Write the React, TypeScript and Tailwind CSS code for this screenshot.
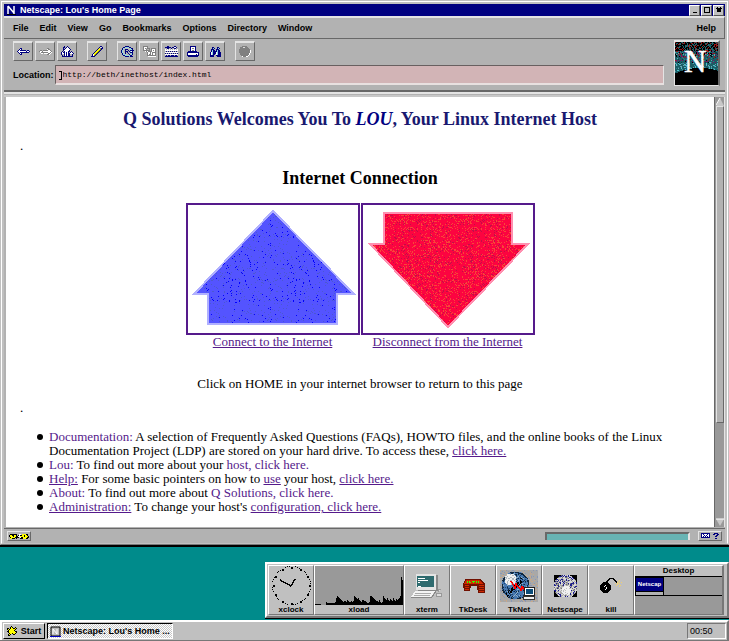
import type { ReactNode } from 'react';

const palette: Record<string, string> = {
  b: '#000080',
  w: '#ffffff',
  k: '#000000',
  g: '#808080',
  l: '#dcdcdc',
  y: '#ffff00',
  o: '#808000',
  s: '#f0d070',
  c: '#c0c0c0',
  r: '#d02800',
  m: '#701000',
  n: '#30ff00',
  a: '#8fd8e0',
};

function Pixels({ rows }: { rows: string[] }) {
  const width = Math.max(...rows.map((r) => r.length));
  return (
    <svg width={width} height={rows.length} shapeRendering="crispEdges" aria-hidden="true">
      {rows.flatMap((row, y) =>
        row.split('').map((ch, x) =>
          palette[ch] ? <rect key={`${x}-${y}`} x={x} y={y} width="1" height="1" fill={palette[ch]} /> : null,
        ),
      )}
    </svg>
  );
}

function makeRandom(seed: number) {
  let s = seed;
  return () => {
    s = (s * 16807) % 2147483647;
    return s / 2147483647;
  };
}

const backIcon = [
  '...bb........',
  '..bwb........',
  '.bwbbbbbb.bb.',
  'bwwwwwwwwbwwb',
  '.bwbbbbbbbbb.',
  '..bwb........',
  '...bb........',
];
const forwardIcon = [
  '........gg...',
  '........wgg..',
  '.gg.gggggwwg.',
  'gwwgwwwwwwwwg',
  '.wgggggggwwgw',
  '..ww.wwwwggw.',
  '........ggw..',
];
const homeIcon = [
  '...b..b......',
  '..bb.bwb.....',
  '..b.bwwwb....',
  '..bbwwwwwb...',
  '..bwwwwwb....',
  '.b.bwwwbb.b..',
  'bwbbwbwb.bwb.',
  'bwwbwbwbbwwwb',
  'b..bwbwbb..b.',
  '.b.bwbwbb..b.',
  '.bbbbbbbbbbb.',
];
const editIcon = [
  '.........bb.',
  '........bllb',
  '.......bygbb',
  '......byyob.',
  '.....byyob..',
  '....byyob...',
  '...byyob....',
  '..byyob.....',
  '.bwyob......',
  '.bwob.......',
  'bbbb........',
];
const reloadIcon = [
  '....bbbb.....',
  '..bbaaaabb...',
  '.baccccccabb.',
  '.ba.bbb.caab.',
  'bac.b..b.bbbb',
  'bac.bbb.bawb.',
  'bac.b.b..bbb.',
  '.bacb..b..ab.',
  '.baacc..bcab.',
  '..bbaaaaabb..',
  '....bbbb.bbb.',
];
const imagesIcon = [
  'ggggg........',
  'gwwwg........',
  'gwg.ggg.ggggg',
  'gwwg..g.gwwwg',
  'ggggggg.gwgwg',
  '..wgwggggwwwg',
  '....gwwgwgggg',
  '....gwwgwgwwg',
  '....gwggwgwwg',
  '....ggggggggg',
  '.....wwwwwwww',
];
const openIcon = [
  '..bb.....bb..',
  'bbbbbb.bbwwb.',
  '..bb..b..bb..',
  'w.w.w.w.w.w.w',
  'wwwwwwwwwwwww',
  '.b.b.b.b.b.b.',
  'wwwwwwwwwwwww',
  'b.b.b.b.b.b.b',
  'wwwwwwwwwwwww',
  '.b.bb.bbb.bb.',
  'bbbbbbbbbbbbb',
];
const printIcon = [
  '...bbbbbb....',
  '...bwwwwb....',
  '...bwggwb....',
  '...bwwwwb....',
  '...bwggwb....',
  '.bbbbbbbbb...',
  'bbbbbbbbbbbb.',
  'bwwwwwwwwwwb.',
  'bwwwwwwwwbwb.',
  'bbbbbbbbbbbb.',
  '.bbbbbbbbbb..',
];
const findIcon = [
  '..bb...bb..',
  '..bab..bab.',
  '.bbb..bbb..',
  '.babb.babb.',
  '.babbbbabb.',
  'bwabbbwabbb',
  'bwabbbwabbb',
  'bwabb.wabbb',
  'bbbb..bbbbb',
  'bbbb...bbbb',
];
const stopIcon = [
  '...ggggg....',
  '.gggllggg...',
  '.ggggggggg..',
  'ggggggggggg.',
  'gggggggggggw',
  'gggggggggggw',
  'gggggggggggw',
  '.gggggggggw.',
  '.gggggggggw.',
  '..gggggggw..',
  '...wgggww...',
];
const starIcon = [
  '....k......',
  '...kyk..k..',
  'kk.kyykkyk.',
  'kykyyyyyk..',
  '.kyyyyyk...',
  'kkyyyyyykk.',
  '.kyyyyyyyk.',
  '..kyykyyk..',
  '.kyk..kk...',
  '.kk........',
];
const keyIcon = [
  '.kkkkkkk..ww.yyyykk.',
  'kyykkyyk.kwkkyykyyk.',
  'kyyykyykkwwyyyykyyyk',
  '.kyyyykkkk.wkkyyyykk',
  '.yykkk.k...kkkyyykk.',
];
const mailIcon = [
  'bbbbbbbbb....bbbb.',
  'bwbwwwbwb...bb..bb',
  'bwwbwbwwb......bb.',
  'bwbwbwbwb.....bb..',
  'bbbbbbbbb.........',
  '..............bb..',
];
const deskIcon = [
  '...mmmmmmmmmmmmmmmm....',
  '...mrrrrrrrrrrrrrrmm...',
  '..mrrnrnrrnnnrnrnrrmm..',
  '..mrrnrnnrrnrrnrnrrrmm.',
  '.mrrrrrrrrrrrrrrrrrrrmm',
  '.mmmmmmmmmmmmmmmmmmmmmm',
  '.mmrrrrmmmmmmmmmmrrrrrm',
  '.mmmmmmmm......mmmmmmmm',
  '.mmrrrrmm......mmrrrrrm',
  '..mmmmmm.......mmmmmmmm',
  '..mrrrrm.......mmrrrrrm',
  '..mmmmmm........mmmmmmm',
  '................mrrrrrm',
  '................mmmmmmm',
];
const bombIcon = [
  '.........kkkkk........',
  '........kk...kk.......',
  '.......kk.....kk...s..',
  '......kk.......kk.s...',
  '...kkkkk........ks.s.s',
  '..kkkkkkk......s.ss...',
  '.kkkkkkkkk.......s.s..',
  'kkkkkwkkkkk.....s...s.',
  'kkkkwkkkkkk........s..',
  'kkkkkkwkkkk...........',
  'kkkkkkwkkkk...........',
  'kkkkkwkkkkk...........',
  '.kkkkkkkkk............',
  '..kkkkkkk.............',
  '...kkkkk..............',
];

function ToolButton({ label, rows }: { label: string; rows: string[] }) {
  return (
    <button
      type="button"
      aria-label={label}
      className="flex size-5 items-center justify-center border border-t-2 border-[#e4e4e4] border-r-[#686868] border-b-[#686868]"
    >
      <Pixels rows={rows} />
    </button>
  );
}

function NetscapeLogo() {
  const random = makeRandom(77);
  const dots: ReactNode[] = [];
  const upper = ['#9c1818', '#000000', '#000000', '#286870', '#000000'];
  const middle = ['#000000', '#2a7f86', '#801060', '#103c44', '#5ca8b0', '#9c1818'];
  const lower = ['#48c8d0', '#3c909c', '#68a8b8', '#2a7f86'];
  for (let y = 0; y < 43; y++) {
    for (let x = 0; x < 43; x++) {
      const density = y < 9 ? 0.85 : y < 15 ? 0.6 : 0.3;
      const v = random();
      const pick = random();
      if (v < density) {
        const set = y < 9 ? upper : y < 21 ? middle : lower;
        dots.push(
          <rect key={`${x}-${y}`} x={x} y={y} width="1" height="1" fill={set[Math.floor(pick * set.length)]} />,
        );
      }
    }
  }
  return (
    <svg width="43" height="43" viewBox="0 0 43 43" role="img" aria-label="Netscape" className="overflow-hidden bg-[#1b5d65]">
      <g shapeRendering="crispEdges">{dots}</g>
      <ellipse cx="25" cy="52" rx="40" ry="26" fill="#000000" shapeRendering="crispEdges" />
      <text
        x="9"
        y="30"
        fontSize="31"
        fill="#ffffff"
        stroke="#ffffff"
        strokeWidth="0.6"
        className="font-['Liberation_Serif',serif]"
      >
        N
      </text>
    </svg>
  );
}

function Arrow({ kind }: { kind: 'up' | 'down' }) {
  const up = kind === 'up';
  const random = makeRandom(up ? 11 : 29);
  const count = up ? 330 : 1000;
  const specks = Array.from({ length: count }, () => [
    Math.floor(random() * 64),
    Math.floor(random() * 64),
    random(),
  ]);
  const points = up ? '85,6 166,89 149,89 149,119 20,119 20,89 6,89' : '21,8 149,8 149,39 165,39 85,122 7,39 21,39';
  return (
    <svg viewBox="0 0 170 128" className="block w-full" aria-hidden="true">
      <defs>
        <pattern id={`specks-${kind}`} width="64" height="64" patternUnits="userSpaceOnUse">
          <rect width="64" height="64" fill={up ? '#5454ff' : '#fc0440'} />
          {specks.map(([x, y, tone], i) => (
            <rect
              key={i}
              x={x}
              y={y}
              width="1"
              height="1"
              fill={up ? (tone < 0.4 ? '#0000ff' : '#4c58d0') : tone < 0.65 ? '#f84838' : '#c01048'}
            />
          ))}
        </pattern>
      </defs>
      <polygon
        points={points}
        fill={`url(#specks-${kind})`}
        stroke={up ? '#b0b0ff' : '#ff90b0'}
        strokeWidth="2"
        shapeRendering="crispEdges"
      />
    </svg>
  );
}

function Clock() {
  const ticks = Array.from({ length: 60 }, (_, i) => {
    const a = (i * Math.PI) / 30;
    const major = i % 5 === 0;
    const radius = major ? 18 : 19;
    const size = major ? 2 : 1;
    if (!major && i % 5 === 1) return null;
    return (
      <rect
        key={i}
        x={Math.round(21 + radius * Math.sin(a))}
        y={Math.round(19 - radius * Math.cos(a))}
        width={size}
        height={size}
      />
    );
  });
  return (
    <svg width="42" height="40" shapeRendering="crispEdges" aria-hidden="true">
      {ticks}
      <path d="M21 20 10 14M21 20l4-7" stroke="#000" strokeWidth="1.5" fill="none" />
    </svg>
  );
}

const load = [
  1, 1, 1, 1, 1, 1, 0, 0, 0, 0, 0, 3, 2, 2, 2, 2, 2, 2, 2, 2, 3, 7, 9, 8, 7, 6, 5, 4, 3, 4, 4, 3, 5, 4, 3, 3, 4, 3, 4,
  9, 8, 7, 6, 7, 5, 4, 3, 5, 5, 4, 4, 3, 2, 2, 3, 9, 9, 8, 7, 6, 5, 4, 4, 3, 5, 3, 2, 3, 9, 7, 6, 5, 7, 5, 4, 6, 5, 4,
  7, 5, 4, 6, 5, 6, 7, 9, 28, 25,
];

function LoadChart() {
  return (
    <svg width="88" height="39" className="bg-[#999]" shapeRendering="crispEdges" aria-hidden="true">
      {load.map((v, x) => (
        <rect key={x} x={x} y={39 - v} width="1" height={v} />
      ))}
    </svg>
  );
}

function Terminal() {
  return (
    <svg width="32" height="26" shapeRendering="crispEdges" aria-hidden="true">
      <path d="M5 1h20v16H5z" fill="#e4e4e4" />
      <path d="M25 2h2v16H7v-1h18z" fill="#888" />
      <path d="M6 3h17v11H6z" fill="#2f6b6f" />
      <path d="M7 5h7M7 7h10M7 9h2M7 13h3" stroke="#fff" />
      <path d="M4 18h20l-4 6H0z" fill="#f4f4f4" />
      <path d="M4 20h16M3 22h16" stroke="#aaa" />
      <path d="M0 24h21l4-6" stroke="#888" fill="none" />
      <path d="M25 20h5v3h-5zM27 19v-3h3" stroke="#999" fill="#ddd" />
    </svg>
  );
}

function Globe({ network }: { network: boolean }) {
  const size = network ? 38 : 23;
  const random = makeRandom(network ? 5 : 91);
  const cx = network ? 15 : 11;
  const cy = network ? 15 : 11;
  const r = network ? 14 : 12;
  const height = network ? 32 : 22;
  const cells: ReactNode[] = [];
  for (let y = 0; y < height; y++) {
    for (let x = 0; x < size; x++) {
      const d = Math.hypot(x - cx, y - cy);
      const v = random();
      let fill = '';
      if (d < r) {
        if (network) {
          fill = v < 0.64 ? '#4878b0' : v < 0.76 ? '#102840' : v < 0.9 ? '#1c4878' : '#90b0c8';
          if (d > r - 1.5 && v > 0.3) fill = '#102840';
          if (Math.hypot(x - 10, y - 9) < 6) fill = v < 0.7 ? '#f0f0f0' : '#b0b8c0';
          if (x + y > 28 && x + y < 34 && x < 22 && v > 0.4) fill = '#000';
        } else {
          fill = v < 0.34 ? '#d8d8d8' : v < 0.64 ? '#a8a8a8' : v < 0.78 ? '#707070' : '#1c1c90';
          if (Math.hypot(x - 12, y - 15) < 5) fill = v < 0.7 ? '#f0f0f0' : '#c0c0c0';
        }
      } else {
        fill = network ? (v < 0.12 ? '#c8a888' : v < 0.25 ? '#8898b8' : '#a8a8a8') : '#000';
      }
      cells.push(<rect key={`${x}-${y}`} x={x} y={y} width="1" height="1" fill={fill} />);
    }
  }
  return (
    <svg width={size} height={height} shapeRendering="crispEdges" aria-hidden="true">
      {cells}
      {network && (
        <>
          <path d="M11 11l4 7 1-4 5 6 1-3 4 4" stroke="#f00" strokeWidth="1.5" fill="none" />
          <path d="M24 17h10v8H24z" fill="#fff" stroke="#222" />
          <path d="M26 19h7v5h-7z" fill="#0b4c78" />
          <path d="M23 26h11v3H23z" fill="#f0f0f0" stroke="#333" />
        </>
      )}
    </svg>
  );
}

function DockItem({ label, wide, children }: { label: string; wide?: boolean; children: ReactNode }) {
  return (
    <button
      type="button"
      className={`flex h-[50px] flex-col items-center border border-white border-r-[#777] border-b-[#777] ${
        wide ? 'w-[90px]' : 'w-[46px]'
      }`}
    >
      <span className="flex h-[39px] w-full items-center justify-center overflow-hidden">{children}</span>
      <span className="text-[8px] leading-[9px] font-bold">{label}</span>
    </button>
  );
}

function PageLink({ plain, children }: { plain?: boolean; children: ReactNode }) {
  return (
    <a href="#top" className={`text-[#551a8b] ${plain ? '' : 'underline'}`}>
      {children}
    </a>
  );
}

function Bullet({ children }: { children: ReactNode }) {
  return (
    <li className="relative before:absolute before:top-1 before:-left-3 before:size-[6px] before:rounded-full before:bg-black">
      {children}
    </li>
  );
}

const menus = ['File', 'Edit', 'View', 'Go', 'Bookmarks', 'Options', 'Directory', 'Window'];

function TitleButton({ label, children }: { label: string; children: ReactNode }) {
  return (
    <button
      type="button"
      aria-label={label}
      className="flex size-[11px] items-center justify-center border border-white border-r-[#555] border-b-[#555] bg-[#c0c0c0]"
    >
      <svg width="8" height="8" shapeRendering="crispEdges" stroke="#000" fill="none" aria-hidden="true">
        {children}
      </svg>
    </button>
  );
}

function BrowserWindow() {
  return (
    <section className="border-b-2 border-black bg-[#b2b2b2]">
      <div className="border border-[#c0c0c0] border-b-[#777]">
        <div className="border border-white border-b-[#c0c0c0]">
          <div className="border-2 border-b-0 border-[#c0c0c0]">
            <div className="flex h-3 items-center bg-[#000080] pl-[3px]">
              <svg width="9" height="10" aria-hidden="true">
                <path d="M0 9h9v1H0z" fill="#000" />
                <path d="M1 1v8M1 1l6 7M7 1v8" stroke="#fff" strokeWidth="1.5" fill="none" />
              </svg>
              <h1 className="ml-1 flex-1 text-[9px] leading-3 font-bold text-white">Netscape: Lou&apos;s Home Page</h1>
              <div className="flex gap-px pr-px">
                <TitleButton label="Minimize">
                  <path d="M2 6.5h4" />
                </TitleButton>
                <TitleButton label="Maximize">
                  <path d="M1.500 1.500h5v5h-5z" />
                </TitleButton>
                <TitleButton label="Close">
                  <path d="M2 2l4 4M6 2l-4 4" strokeWidth="1.5" />
                </TitleButton>
              </div>
            </div>

            <nav className="flex h-[23px] items-center gap-[11px] border-t-2 border-r border-b border-[#e4e4e4] border-r-[#686868] border-b-[#686868] pr-2 pl-[9px] text-[9px] leading-3 font-bold">
              {menus.map((menu) => (
                <button key={menu} type="button">
                  {menu}
                </button>
              ))}
              <button type="button" className="ml-auto">
                Help
              </button>
            </nav>

            <div className="flex items-center gap-[10px] border-b-2 border-[#686868] pt-px pr-[5px] pb-1 pl-[9px]">
              <div className="flex-1">
                <div className="flex gap-[10px]">
                  <div className="flex gap-[2px]">
                    <ToolButton label="Back" rows={backIcon} />
                    <ToolButton label="Forward" rows={forwardIcon} />
                    <ToolButton label="Home" rows={homeIcon} />
                  </div>
                  <ToolButton label="Edit" rows={editIcon} />
                  <div className="flex gap-[2px]">
                    <ToolButton label="Reload" rows={reloadIcon} />
                    <ToolButton label="Load images" rows={imagesIcon} />
                    <ToolButton label="Open" rows={openIcon} />
                    <ToolButton label="Print" rows={printIcon} />
                    <ToolButton label="Find" rows={findIcon} />
                  </div>
                  <ToolButton label="Stop" rows={stopIcon} />
                </div>
                <div className="mt-1 flex items-center gap-px">
                  <label htmlFor="location" className="text-[9px] leading-3 font-bold">
                    Location:
                  </label>
                  <div className="relative flex flex-1">
                    <input
                      id="location"
                      type="text"
                      defaultValue="http://beth/inethost/index.html"
                      className="h-5 flex-1 border border-b-2 border-[#686060] border-r-[#e4e4e4] border-b-[#e8e0e0] bg-[#d2b4b6] px-[7px] font-['Liberation_Mono',monospace] text-[8px] leading-3 outline-none"
                    />
                    <span className="absolute top-[6px] left-1 h-[9px] w-[3px] border border-l-0 border-black" />
                  </div>
                </div>
              </div>
              <div className="border border-t-2 border-r-2 border-[#e4e4e4] border-r-[#686868]">
                <div className="flex">
                  <NetscapeLogo />
                </div>
              </div>
            </div>
            <div className="h-[5px] border-y-2 border-[#c8c8c8] border-t-[#e4e4e4]" />

            <div className="flex border-r border-l-2 border-[#b2b2b2] border-r-[#e4e4e4]">
              <main className="flex-1 bg-white px-[14px] pt-3 pb-[13px] font-['Liberation_Serif',serif] text-[13px] leading-[14px]">
                <h2 className="text-center text-lg leading-5 font-bold text-[#191970]">
                  Q Solutions Welcomes You To <em className="text-[#000080]">LOU</em>, Your Linux Internet Host
                </h2>
                <p className="mt-[10px]">.</p>
                <h3 className="mt-[15px] text-center text-lg leading-5 font-bold">Internet Connection</h3>
                <div className="mt-[15px] flex justify-center gap-px">
                  <a href="#connect" className="w-[174px] text-center text-[#551a8b]">
                    <span className="block border-2 border-[#551a8b]">
                      <Arrow kind="up" />
                    </span>
                    <span className="underline">Connect to the Internet</span>
                  </a>
                  <a href="#disconnect" className="w-[174px] text-center text-[#551a8b]">
                    <span className="block border-2 border-[#551a8b]">
                      <Arrow kind="down" />
                    </span>
                    <span className="underline">Disconnect from the Internet</span>
                  </a>
                </div>
                <p className="mt-7 text-center">Click on HOME in your internet browser to return to this page</p>
                <p className="mt-[10px]">.</p>
                <ul className="mt-[15px] pr-4 pl-[29px]">
                  <Bullet>
                    <PageLink plain>Documentation:</PageLink> A selection of Frequently Asked Questions (FAQs), HOWTO
                    files, and the online books of the Linux Documentation Project (LDP) are stored on your hard drive.
                    To access these, <PageLink>click here.</PageLink>
                  </Bullet>
                  <Bullet>
                    <PageLink plain>Lou:</PageLink> To find out more about your{' '}
                    <PageLink plain>host, click here.</PageLink>
                  </Bullet>
                  <Bullet>
                    <PageLink>Help:</PageLink> For some basic pointers on how to <PageLink>use</PageLink> your host,{' '}
                    <PageLink>click here.</PageLink>
                  </Bullet>
                  <Bullet>
                    <PageLink plain>About:</PageLink> To find out more about{' '}
                    <PageLink plain>Q Solutions, click here.</PageLink>
                  </Bullet>
                  <Bullet>
                    <PageLink>Administration:</PageLink> To change your host&apos;s{' '}
                    <PageLink>configuration, click here.</PageLink>
                  </Bullet>
                </ul>
              </main>
              <div className="flex w-[10px] flex-col items-center border-l border-[#686868] bg-[#999]">
                <svg width="8" height="9" aria-hidden="true">
                  <path d="M4 1l4 8H0z" fill="#c8c8c8" />
                  <path d="M4 1L0 8" stroke="#fff" />
                </svg>
                <div className="w-2 flex-10 border border-[#e4e4e4] border-r-[#686868] border-b-[#686868] bg-[#b2b2b2]" />
                <div className="flex-3" />
                <svg width="8" height="9" aria-hidden="true">
                  <path d="M0 1h8L4 8z" fill="#c8c8c8" />
                  <path d="M0 1h8" stroke="#fff" />
                </svg>
              </div>
            </div>

            <footer className="mt-px flex h-[15px] items-center border-t border-[#686868] px-[3px]">
              <div className="flex h-[10px] w-6 items-center justify-center border border-[#e4e4e4] border-r-[#686868] border-b-[#686868]">
                <Pixels rows={keyIcon} />
              </div>
              <div className="ml-auto h-2 w-[145px] border-2 border-b-0 border-[#686868] border-r-[#e4e4e4] bg-[#68b4b4]" />
              <button
                type="button"
                aria-label="Mail"
                className="ml-2 flex h-[10px] w-6 items-center justify-center border border-[#e4e4e4] border-r-[#686868] border-b-[#686868]"
              >
                <Pixels rows={mailIcon} />
              </button>
            </footer>
          </div>
        </div>
      </div>
    </section>
  );
}

function Dock() {
  return (
    <aside className="mt-[15px] ml-auto border-b border-black">
      <div className="flex border-2 border-white border-r-[#777] border-b-[#777] bg-[#c0c0c0] p-px pr-[3px]">
        <DockItem label="xclock">
          <Clock />
        </DockItem>
        <DockItem label="xload" wide>
          <LoadChart />
        </DockItem>
        <DockItem label="xterm">
          <Terminal />
        </DockItem>
        <DockItem label="TkDesk">
          <Pixels rows={deskIcon} />
        </DockItem>
        <DockItem label="TkNet">
          <Globe network />
        </DockItem>
        <DockItem label="Netscape">
          <Globe network={false} />
        </DockItem>
        <DockItem label="kill">
          <Pixels rows={bombIcon} />
        </DockItem>
        <div className="flex h-[50px] w-[90px] flex-col border border-r-2 border-white border-r-[#777] border-b-[#777] bg-[#999]">
          <span className="border-b border-black bg-[#c0c0c0] text-center text-[8px] leading-[10px] font-bold">
            Desktop
          </span>
          <div className="h-[19px] border-b border-black">
            <div className="h-[19px] w-[29px] border border-black bg-[#000080]">
              <span className="block overflow-hidden text-center text-[6px] leading-[13px] font-bold text-white">
                Netscap
              </span>
              <span className="block h-1 border-t border-black bg-[#b2b2b2]" />
            </div>
          </div>
        </div>
      </div>
    </aside>
  );
}

function Taskbar() {
  return (
    <footer className="mt-auto border-b border-[#777] bg-[#c0c0c0]">
      <div className="flex h-5 items-center gap-[2px] border-2 border-b-0 border-white border-r-[#777] px-px">
        <button
          type="button"
          className="flex h-4 w-[42px] items-center justify-center gap-[3px] border border-white border-r-black border-b-black text-[9px] leading-3 font-bold"
        >
          <Pixels rows={starIcon} />
          Start
        </button>
        <button
          type="button"
          className="flex h-4 w-[126px] items-center gap-[2px] border border-black border-r-white border-b-white bg-[repeating-conic-gradient(#fff_0_25%,#c8c8c8_0_50%)] bg-size-[2px_2px] pl-[2px] text-[9px] leading-3 font-bold whitespace-nowrap"
        >
          <svg width="11" height="11" aria-hidden="true">
            <path d="M1 1h9v9H1z" fill="#bbb" stroke="#000" />
            <path d="M3 8V3l4 5V3" stroke="#fff" fill="none" />
            <path d="M0 10h11v1H0z" fill="#0000c0" />
          </svg>
          Netscape: Lou&apos;s Home ...
        </button>
        <time className="ml-auto h-4 w-[39px] border border-[#777] border-r-white border-b-white pl-[2px] text-[9px] leading-[14px]">
          00:50
        </time>
      </div>
    </footer>
  );
}

export default function App() {
  return (
    <div className="flex min-h-screen flex-col bg-[#008b8b] font-['Liberation_Sans',Arial,sans-serif] text-black">
      <BrowserWindow />
      <Dock />
      <Taskbar />
    </div>
  );
}
